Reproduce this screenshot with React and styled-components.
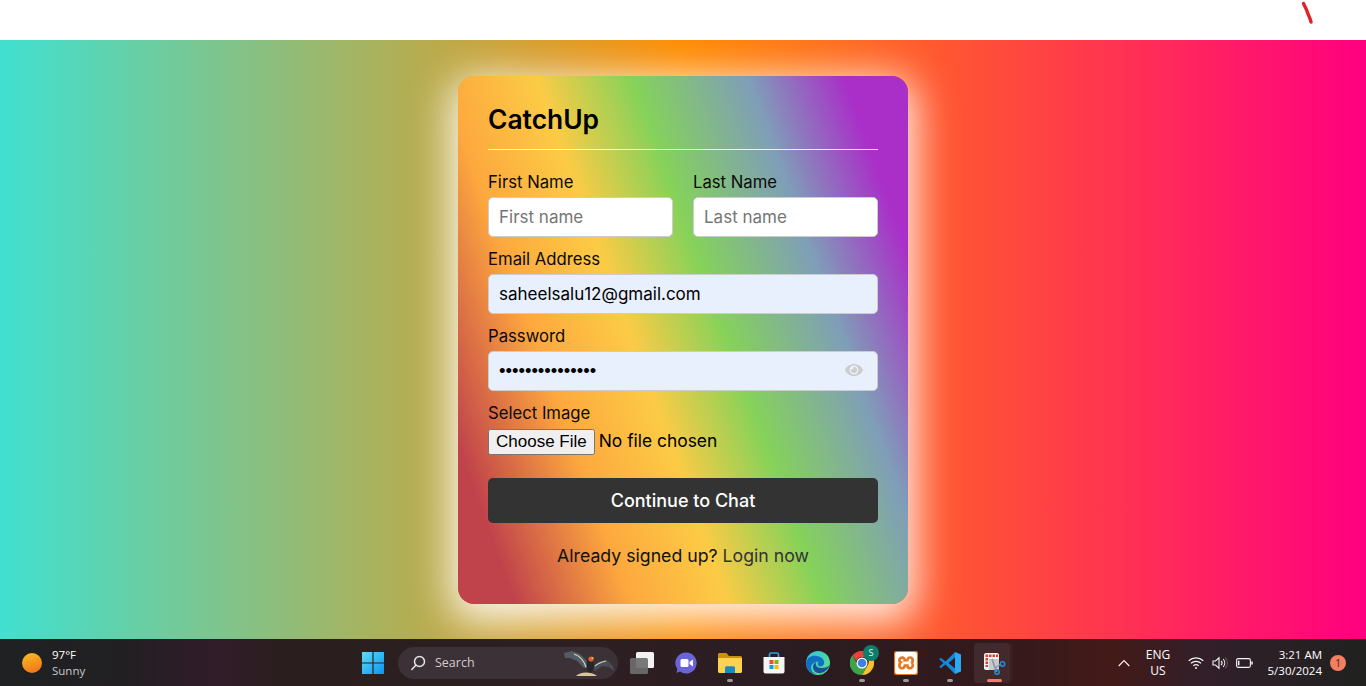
import React from 'react'
import styled, { createGlobalStyle } from 'styled-components'
import { FaEye } from 'react-icons/fa'
import { SiXampp } from 'react-icons/si'

const GlobalStyle = createGlobalStyle`
  html, body { margin: 0; padding: 0; }
  body { font-family: "Inter", "Liberation Sans", sans-serif; background: #fff; overflow: hidden; }
  * { box-sizing: border-box; }
`

const Page = styled.div`
  width: 1366px;
  height: 686px;
  display: flex;
  flex-direction: column;
`

const TopBar = styled.div`
  height: 40px;
  background: #fff;
  display: flex;
  justify-content: flex-end;
  padding: 1px 52px 0 0;
`

const Main = styled.main`
  height: 599px;
  padding-top: 36px;
  display: flex;
  justify-content: center;
  align-items: flex-start;
  background: linear-gradient(90deg, #40e0d0, #ff8c00, #ff0080);
`

const Card = styled.div`
  width: 450px;
  height: 528px;
  padding: 20px 30px;
  border-radius: 16px;
  background: linear-gradient(70deg, #c0434b 9%, #fda83e 27%, #fccb45 42%, #85d25a 57%, #7f9eb8 75%, #a92fc8 90%);
  box-shadow: 0 10px 40px 8px rgba(255, 255, 255, 0.9);
`

const Title = styled.div`
  font-size: 26.4px;
  font-weight: 600;
  line-height: 46px;
  color: #000;
  padding-bottom: 7px;
  border-bottom: 1px solid rgba(255, 255, 255, 0.85);
`

const Form = styled.form`
  margin-top: 19px;
  display: flex;
  flex-direction: column;
  gap: 9px;
`

const Row = styled.div`
  display: flex;
  gap: 20px;
`

const Field = styled.div`
  flex: 1;
  min-width: 0;
  display: flex;
  flex-direction: column;
`

const Label = styled.label`
  font-size: 16.7px;
  line-height: 27px;
  margin-bottom: 1px;
  color: #0a0a0a;
`

const InputWrap = styled.div`
  position: relative;
`

const TextInput = styled.input`
  width: 100%;
  height: 40px;
  padding: 0 10px;
  font-family: ${p => (p.$dots ? '"Liberation Sans", sans-serif' : 'inherit')};
  font-size: ${p => (p.$dots ? '18.5px' : '17px')};
  color: #000;
  border: 1px solid #ccc;
  border-radius: 5px;
  outline: none;
  background: ${p => (p.$filled ? '#e8f0fe' : '#fff')};
  &::placeholder { color: #757575; }
`

const EyeButton = styled.span`
  position: absolute;
  right: 15px;
  top: 10px;
  color: #ccc;
  font-size: 18px;
  line-height: 18px;
  display: flex;
`

const FileInput = styled.input`
  font-family: inherit;
  font-size: 17.4px;
  color: #000;
  width: 100%;
  height: 27px;
  margin-top: 1px;
  &::file-selector-button {
    font-family: "Liberation Sans", sans-serif;
    font-size: 17px;
    height: 26px;
    padding: 1px 6px;
    margin-right: 4px;
  }
`

const Submit = styled.button`
  height: 45px;
  margin-top: 13px;
  border: none;
  border-radius: 5px;
  background: #333;
  color: #fff;
  font-family: inherit;
  font-size: 18px;
  font-weight: 500;
`

const Footer = styled.div`
  margin-top: 20px;
  text-align: center;
  font-size: 17.7px;
  line-height: 26px;
  color: #111;
  a { color: #333; text-decoration: none; }
`

const Taskbar = styled.footer`
  height: 47px;
  display: flex;
  align-items: center;
  color: #fff;
  font-family: "Open Sans", "Noto Sans", sans-serif;
  background: linear-gradient(90deg, #1f2123 0, #211f22 120px, #321c2a 215px, #2a1f1e 290px, #2d1f22 560px, #2a1c20 800px, #34191c 1000px, #431a18 1110px, #311f2a 1210px, #20211f 1366px);
`

const Weather = styled.div`
  width: 361px;
  padding-left: 22px;
  display: flex;
  align-items: center;
  gap: 10px;
`

const Sun = styled.span`
  width: 20px;
  height: 20px;
  border-radius: 50%;
  background: linear-gradient(160deg, #f6c02c, #f36c12);
`

const WeatherText = styled.div`
  font-size: 11.5px;
  line-height: 16px;
  padding-top: 1px;
  span { display: block; color: #c9c9c9; }
`

const StartIcon = styled.div`
  width: 37px;
  display: flex;
`

const SearchBox = styled.div`
  position: relative;
  width: 220px;
  height: 32px;
  border-radius: 16px;
  background: #3b3136;
  display: flex;
  align-items: center;
  padding-left: 12px;
  gap: 9px;
  font-size: 12.5px;
  color: #d0cccc;
  margin-right: 2px;
`

const Doodle = styled.svg`
  position: absolute;
  left: 162px;
  top: 1px;
`

const AppSlot = styled.div`
  position: relative;
  width: 44px;
  height: 47px;
  display: flex;
  align-items: center;
  justify-content: center;
  font-size: 24px;
  color: #fff;
  &::after {
    content: '';
    display: ${p => (p.$dot ? 'block' : 'none')};
    position: absolute;
    bottom: 4px;
    left: 19px;
    width: 6px;
    height: 3px;
    border-radius: 2px;
    background: #9a9a9a;
  }
`

const ActiveSlot = styled(AppSlot)`
  &::before {
    content: '';
    position: absolute;
    left: 2px;
    top: 4px;
    width: 36px;
    height: 40px;
    border-radius: 4px;
    background: rgba(255, 255, 255, 0.07);
    box-shadow: 3px 0 0 rgba(255, 255, 255, 0.03);
  }
  &::after {
    display: block;
    left: 15px;
    width: 15px;
    background: #ee7f6c;
  }
  svg { position: relative; }
`

const Badge = styled.span`
  position: absolute;
  right: 5px;
  top: 6px;
  width: 16px;
  height: 16px;
  border-radius: 50%;
  background: #0d7d6c;
  color: #e8f5f0;
  font-size: 9px;
  line-height: 16px;
  text-align: center;
`

const Tray = styled.div`
  margin-left: auto;
  display: flex;
  align-items: center;
`

const Lang = styled.div`
  width: 34px;
  margin: 0 13px 0 11px;
  padding-top: 1px;
  font-size: 12px;
  line-height: 16px;
  text-align: center;
`

const TrayIcons = styled.div`
  display: flex;
  align-items: center;
  gap: 8px;
  width: 56px;
  svg { flex: none; }
`

const Clock = styled.div`
  width: 78px;
  text-align: right;
  font-size: 11.5px;
  line-height: 16px;
`

const Notify = styled.span`
  width: 16px;
  height: 16px;
  margin: 0 20px 0 8px;
  border-radius: 50%;
  background: #f27f5f;
  color: #3a1c14;
  font-size: 10px;
  line-height: 16px;
  text-align: center;
`

const WinLogo = () => (
  <svg width="24" height="24" viewBox="0 0 24 24">
    <defs>
      <linearGradient id="win" x1="0" y1="0" x2="1" y2="1">
        <stop offset="0" stopColor="#5fdcf4" />
        <stop offset="1" stopColor="#0a94f2" />
      </linearGradient>
    </defs>
    <path fill="url(#win)" d="M1 1h10.4v10.4H1zM12.6 1H23v10.4H12.6zM1 12.6h10.4V23H1zM12.6 12.6H23V23H12.6z" />
  </svg>
)

const SearchIcon = () => (
  <svg width="16" height="16" viewBox="0 0 16 16" fill="none" stroke="#e6e6e6" strokeWidth="1.5">
    <circle cx="9.5" cy="6.5" r="5" />
    <path d="M5.8 10.2 1.8 14.5" strokeLinecap="round" />
  </svg>
)

const Bird = () => (
  <Doodle width="60" height="32" viewBox="0 0 60 32">
    <path d="M4 5 12 3 20 6 27 13 28 20 24 20 17 13 10 10 5 10Z" fill="#555b63" />
    <path d="M14 6C20 8 24 13 26 19" stroke="#d8d8c0" strokeWidth="1.2" fill="none" />
    <path d="M33 19 38 14 47 12 53 18 54 23 49 19 42 18 35 23Z" fill="#4a4f57" />
    <path d="M35 18C38 15 42 14 46 13" stroke="#cfcfc0" strokeWidth="1.2" fill="none" />
    <path d="M27 12C30 10 34 13 34 18 34 22 31 25 29 25 27 22 26 16 27 12Z" fill="#23262b" />
    <circle cx="31" cy="11" r="2.6" fill="#e0602a" />
    <circle cx="32.500" cy="10" r="1" fill="#f0c040" />
    <path d="M16 28C20 24 30 23 37 28Z" fill="#d9c69a" />
  </Doodle>
)

const TaskView = () => (
  <svg width="26" height="24" viewBox="0 0 26 24">
    <rect x="7" y="1" width="18" height="16" rx="1.5" fill="#f2f2f2" />
    <rect x="1" y="7" width="18" height="16" rx="1.5" fill="#6e6e6e" fillOpacity="0.92" />
  </svg>
)

const Meet = () => (
  <svg width="24" height="24" viewBox="0 0 24 24">
    <path d="M12 1.5a10.5 10.5 0 1 1-6 19l-3.5 1.5.8-4A10.5 10.5 0 0 1 12 1.5Z" fill="#6a64d8" />
    <rect x="6.5" y="8" width="8" height="8" rx="1.5" fill="#fff" />
    <path d="M15.5 11 19 8.5v7L15.5 13Z" fill="#fff" />
  </svg>
)

const Folder = () => (
  <svg width="26" height="24" viewBox="0 0 26 24">
    <path d="M1 3.5C1 2.7 1.7 2 2.5 2h7l2.5 3h11.5c.8 0 1.5.7 1.5 1.5V9H1Z" fill="#c98f12" />
    <path d="M1 7h24v13.5c0 .8-.7 1.5-1.5 1.5h-21C1.7 22 1 21.3 1 20.5Z" fill="#fdd24e" />
    <path d="M8 17c0-1 .7-1.7 1.5-1.7h7c.8 0 1.5.7 1.5 1.7v5H8Z" fill="#1b87c9" />
  </svg>
)

const Store = () => (
  <svg width="24" height="24" viewBox="0 0 24 24">
    <path d="M7.5 7V3.5C7.5 2.5 8.2 2 9 2h6c.8 0 1.5.5 1.5 1.5V7" fill="none" stroke="#2aa3d8" strokeWidth="1.7" />
    <path d="M1.5 6h21v14.5c0 1-.8 2-2 2h-17c-1.2 0-2-1-2-2Z" fill="#f5f5f5" />
    <rect x="7.500" y="9" width="4" height="4" fill="#f25022" />
    <rect x="12.500" y="9" width="4" height="4" fill="#7fba00" />
    <rect x="7.500" y="14" width="4" height="4" fill="#00a4ef" />
    <rect x="12.500" y="14" width="4" height="4" fill="#ffb900" />
  </svg>
)

const Edge = () => (
  <svg width="24" height="24" viewBox="0 0 24 24">
    <defs>
      <linearGradient id="edgeTop" x1="0" y1="0" x2="1" y2="1">
        <stop offset="0" stopColor="#2fc4e0" />
        <stop offset="1" stopColor="#5fe07e" />
      </linearGradient>
    </defs>
    <circle cx="12" cy="12" r="12" fill="url(#edgeTop)" />
    <path d="M0 12C1 6 6 4 11 5c5 1 8 4 7 8-1 3-5 3-6 1-1-1 0-3 1-3-4-1-8 2-8 6 0 3 2 5 5 6C5 23 0 18 0 12Z" fill="#0f6fc2" />
    <path d="M24 13c-1 5-5 8-9 9-4 1-8-2-8-6 0-2 1-4 3-5-1 3 1 6 5 6 4 0 8-1 9-4Z" fill="#1b4f9c" />
  </svg>
)

const Chrome = () => (
  <svg width="24" height="24" viewBox="0 0 24 24">
    <path d="M12 0a12 12 0 0 1 10.4 6H12a6 6 0 0 0-5.7 4.1L2.5 4.3A12 12 0 0 1 12 0Z" fill="#e5443a" />
    <path d="M22.4 6A12 12 0 0 1 12 24l5.2-9A6 6 0 0 0 16 6Z" fill="#fbc02d" />
    <path d="M12 24A12 12 0 0 1 2.5 4.3l4.7 8.4A6 6 0 0 0 17.2 15L12 24Z" fill="#3fa34d" />
    <circle cx="12" cy="12" r="5.500" fill="#fff" />
    <circle cx="12" cy="12" r="4.300" fill="#3f7fe8" />
  </svg>
)

const XamppTile = styled.span`
  width: 24px;
  height: 24px;
  border-radius: 2px;
  background: #e37722;
  display: flex;
  align-items: center;
  justify-content: center;
  font-size: 22px;
  color: #fff;
`

const VsCode = () => (
  <svg width="24" height="24" viewBox="0 0 24 24">
    <path d="M17 1 23 3.5V20.500L17 23Z" fill="#2aa8f2" />
    <path d="M17 1 7.500 10.500 3 7 1 8 5.500 12 1 16 3 17 7.500 13.500 17 23V17.500L10.500 12 17 6.500Z" fill="#1688dc" />
  </svg>
)

const Snip = () => (
  <svg width="24" height="24" viewBox="0 0 24 24">
    <path d="M2 4c0-1 .7-2 2-2h11c1.300 0 2 1 2 2v13c0 1-.7 2-2 2H4c-1.300 0-2-1-2-2Z" fill="#f2f2f2" />
    <path d="M7 8h10v9c0 1-.7 2-2 2H7Z" fill="#c9c9c9" />
    <path d="M3.500 3.500H6V6H3.500zM7 3.500h2.500V6H7zM10.500 3.500H13V6h-2.500zM14 3.500h2V6h-2zM3.500 7H6v2.500H3.500zM3.500 10.500H6V13H3.500zM3.500 14H6v2H3.500z" fill="#d8402f" />
    <path d="M10 8 14.500 21" stroke="#8a98a8" strokeWidth="1.800" fill="none" />
    <path d="M19 13 13 17" stroke="#8a98a8" strokeWidth="1.500" fill="none" />
    <circle cx="20.500" cy="13" r="2.200" fill="none" stroke="#1f8fd8" strokeWidth="1.500" />
    <circle cx="15" cy="21" r="2.200" fill="none" stroke="#1f8fd8" strokeWidth="1.500" />
  </svg>
)

const Chevron = () => (
  <svg width="12" height="8" viewBox="0 0 12 8" fill="none" stroke="#f0f0f0" strokeWidth="1.2">
    <path d="M.7 7 6 1.500 11.300 7" />
  </svg>
)

const Wifi = () => (
  <svg width="16" height="14" viewBox="0 0 16 14" fill="none" stroke="#f4f4f4" strokeWidth="1.2">
    <path d="M.7 4.700C4.800 1 11.200 1 15.300 4.700M3 7.300c2.800-2.500 7.200-2.500 10 0M5.300 9.700c1.500-1.300 3.900-1.300 5.400 0" />
    <circle cx="8" cy="12" r="1" fill="#f4f4f4" stroke="none" />
  </svg>
)

const Volume = () => (
  <svg width="16" height="14" viewBox="0 0 16 14" fill="none" stroke="#f4f4f4" strokeWidth="1.1">
    <path d="M1 5h2.500L7 1.800v10.400L3.500 9H1Z" />
    <path d="M9.200 4.800c1.100 1.300 1.100 3.100 0 4.400M11.200 3c2 2.300 2 5.700 0 8" />
    <path d="M13.300 1.600c2.600 3.200 2.600 7.600 0 10.800" stroke="#6a5a5a" />
  </svg>
)

const Battery = () => (
  <svg width="17" height="12" viewBox="0 0 17 12" fill="none" stroke="#f4f4f4" strokeWidth="1.1">
    <rect x=".6" y="1.6" width="13.8" height="8.8" rx="1.6" />
    <path d="M2.700 3.700v4.600" strokeWidth="1.5" />
    <path d="M16 4.500v3" strokeWidth="1.5" />
  </svg>
)

const App = () => (
  <Page>
    <GlobalStyle />
    <TopBar>
      <svg width="12" height="25" viewBox="0 0 12 25" fill="none">
        <path d="M1.500 2.500c1 3 3 5 4 9 1 3 2.500 5 3.500 9.500" stroke="#e32026" strokeWidth="3.400" strokeLinecap="round" />
      </svg>
    </TopBar>
    <Main>
      <Card>
        <Title>CatchUp</Title>
        <Form>
          <Row>
            <Field>
              <Label>First Name</Label>
              <TextInput placeholder="First name" />
            </Field>
            <Field>
              <Label>Last Name</Label>
              <TextInput placeholder="Last name" />
            </Field>
          </Row>
          <Field>
            <Label>Email Address</Label>
            <TextInput $filled type="email" defaultValue="saheelsalu12@gmail.com" />
          </Field>
          <Field>
            <Label>Password</Label>
            <InputWrap>
              <TextInput $filled $dots type="password" defaultValue="saheelsalu12345" />
              <EyeButton><FaEye /></EyeButton>
            </InputWrap>
          </Field>
          <Field>
            <Label>Select Image</Label>
            <FileInput type="file" />
          </Field>
          <Submit type="button">Continue to Chat</Submit>
        </Form>
        <Footer>Already signed up? <a href="#login">Login now</a></Footer>
      </Card>
    </Main>
    <Taskbar>
      <Weather>
        <Sun />
        <WeatherText>97°F<span>Sunny</span></WeatherText>
      </Weather>
      <StartIcon><WinLogo /></StartIcon>
      <SearchBox>
        <SearchIcon />
        Search
        <Bird />
      </SearchBox>
      <AppSlot><TaskView /></AppSlot>
      <AppSlot><Meet /></AppSlot>
      <AppSlot $dot><Folder /></AppSlot>
      <AppSlot><Store /></AppSlot>
      <AppSlot><Edge /></AppSlot>
      <AppSlot $dot><Chrome /><Badge>S</Badge></AppSlot>
      <AppSlot $dot><XamppTile><SiXampp /></XamppTile></AppSlot>
      <AppSlot $dot><VsCode /></AppSlot>
      <ActiveSlot><Snip /></ActiveSlot>
      <Tray>
        <Chevron />
        <Lang>ENG<br />US</Lang>
        <TrayIcons><Wifi /><Volume /><Battery /></TrayIcons>
        <Clock>3:21 AM<br />5/30/2024</Clock>
        <Notify>1</Notify>
      </Tray>
    </Taskbar>
  </Page>
)

export default App
